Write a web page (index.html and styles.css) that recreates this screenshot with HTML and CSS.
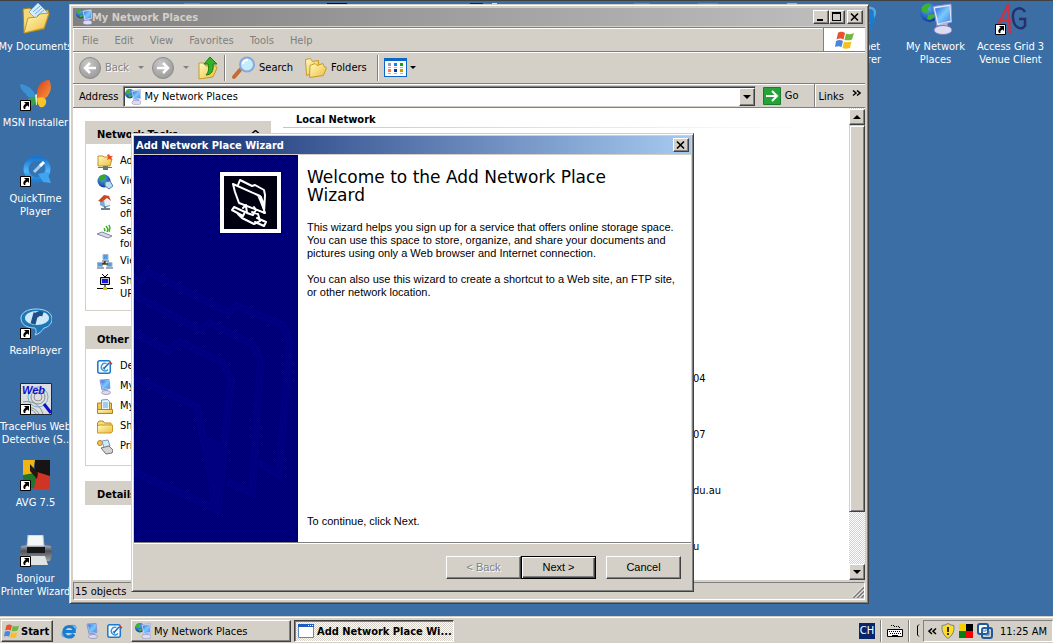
FILE: index.html
```html
<!DOCTYPE html>
<html lang="en">
<head>
<meta charset="utf-8">
<title>Desktop</title>
<link rel="stylesheet" href="styles.css">
</head>
<body>
<svg class="defs" aria-hidden="true">
  <defs>
    <linearGradient id="g-screen" x1="0" y1="0" x2="1" y2="1"><stop offset="0" stop-color="#1c6ae0"/><stop offset=".5" stop-color="#7cc8fa"/><stop offset="1" stop-color="#3a8cf0"/></linearGradient>
    <linearGradient id="g-folder" x1="0" y1="0" x2="1" y2="1"><stop offset="0" stop-color="#fffbc0"/><stop offset="1" stop-color="#eebc3c"/></linearGradient>
    <radialGradient id="g-globe" cx=".4" cy=".3" r=".7"><stop offset="0" stop-color="#5cacf8"/><stop offset="1" stop-color="#0a3ca0"/></radialGradient>
    <radialGradient id="g-grey" cx=".4" cy=".3" r=".7"><stop offset="0" stop-color="#c8c8c8"/><stop offset="1" stop-color="#9c9c9c"/></radialGradient>
    <linearGradient id="g-blue" x1="0" y1="0" x2="0" y2="1"><stop offset="0" stop-color="#1a74d0"/><stop offset=".6" stop-color="#4cb8fc"/><stop offset="1" stop-color="#1c80d8"/></linearGradient>
    <linearGradient id="g-orange" x1="0" y1="0" x2="1" y2="1"><stop offset="0" stop-color="#d83c1c"/><stop offset="1" stop-color="#fc9c3c"/></linearGradient>
    <linearGradient id="g-metal" x1="0" y1="0" x2="0" y2="1"><stop offset="0" stop-color="#b4b8bc"/><stop offset=".4" stop-color="#505458"/><stop offset="1" stop-color="#a0a4a8"/></linearGradient>
  </defs>
  <symbol id="i-shortcut" viewBox="0 0 11 11"><path fill="#fff" stroke="#000" d="M.5.5h10v10H.5z"/><path d="M4 2h5v5L7.500 5.500C5.500 6.500 5 7.500 5.500 9H4C2.500 7 3.500 5 5.700 3.800z"/></symbol>
  <symbol id="i-net" viewBox="0 0 32 32"><circle cx="9.500" cy="9.500" r="9.500" fill="url(#g-globe)"/><path fill="#3cb42c" d="M2 4c3-4 8-4 9-2l-3 3 1 4-4 1-3-2zM8 12l5-1 2 3-5 3-3-1z"/><path fill="#e4e4fa" stroke="#8c90cc" d="M13 3.500l18-2.500 1 18-15 4z"/><path fill="url(#g-screen)" d="M15 5.500L29.500 3l1 14.500-12 3z"/><path fill="#b4b4dc" d="M20 21l7-2 1 5-6 1z"/><ellipse cx="23" cy="27" rx="9" ry="4.500" fill="#dcdcf4" stroke="#7c7cb4"/></symbol>
  <symbol id="i-pc" viewBox="0 0 16 16"><path fill="#dcdcf4" stroke="#8890cc" d="M3 1l9-.5 1 9-8 1.500z"/><path fill="url(#g-screen)" d="M4 1.500l8-.5.5 8-7 1z"/><path fill="#b8b8dc" d="M8 11h3v2H8z"/><ellipse cx="9" cy="13.500" rx="4.500" ry="2" fill="#dcdcf0" stroke="#8484b4" stroke-width=".7"/></symbol>
  <symbol id="i-folder" viewBox="0 0 16 16"><path fill="#f8dc78" stroke="#b88a18" d="M.5 13V4l1.500-2h4l1.500 2H14v9z"/><path fill="url(#g-folder)" stroke="#c89a20" d="M.5 14V7.500L2 6h13.500v6.500L14 14z"/></symbol>
  <symbol id="i-docs" viewBox="0 0 32 32"><path fill="#f4d878" stroke="#a88020" d="M3 6l7-1 3 4 15-2 1 4-5 15L4 30z"/><path fill="#d4ecfc" stroke="#80b4e0" d="M9 9l9-9 10 10-8 10z"/><path stroke="#68a8dc" d="M13 9l7-6M15 11l7-6M17 13l7-6"/><path fill="url(#g-folder)" stroke="#c49628" d="M4 30l4-15 9-1 3-3 9-1-5 15z"/></symbol>
  <symbol id="i-flag" viewBox="0 0 20 18"><path fill="#e8532c" d="M3 2c3-2 5-1 7 0L8.500 8.500c-2-1-4-1.500-7 0z"/><path fill="#72b840" d="M11 2.500c2 1 5 1 8-.5l-2 6.500c-2 1-5 1-7.500.5z"/><path fill="#4888dc" d="M1 10c3-1.500 5-1 7 0l-1.500 6c-2-1-4-1-6.500 0z"/><path fill="#f8c020" d="M9 10.500c2 1 5 1 7.500 0L15 17c-3 1-5 1-7.500 0z"/></symbol>
  <symbol id="i-ie" viewBox="0 0 16 16"><ellipse cx="8" cy="8" rx="8" ry="4" fill="none" stroke="#50a8e8" stroke-width="1.200" transform="rotate(-35 8 8)"/><path fill="none" stroke="#187cd0" stroke-width="3" d="M3.500 8.500h9.800C13 1.800 3.200 1.600 3 8.500c-.1 6.500 7.800 7 10 2.700"/></symbol>
  <symbol id="i-desk" viewBox="0 0 16 16"><rect x=".8" y="1.800" width="12.500" height="12.500" rx="2" fill="#f4faff" stroke="#1c78c8" stroke-width="1.500"/><path fill="none" stroke="#2c90d8" stroke-width="1.300" d="M9.500 4.500A3.800 3.800 0 1 0 11 10.500M6 8.500l2 2"/><path stroke="#1c60b8" stroke-width="1.400" d="M7 9.500l5-5.500"/><path stroke="#d83818" stroke-width="2" d="M12.500 3.500L15 5"/></symbol>
  <symbol id="i-window" viewBox="0 0 16 16"><path fill="#fff" stroke="#5888c8" d="M.5 1.500h15v13H.5z"/><path fill="#1c5cc0" d="M0 1h16v3H0z"/><path fill="#fff" d="M10 2h1v1h-1zM12 2h1v1h-1zM14 2h1v1h-1z"/></symbol>
</svg>

<main class="desktop">
  <svg class="hidden-row" viewBox="0 0 640 2" width="640" height="2" aria-hidden="true"><path fill="#8c7c78" d="M0 0h16v2H0zM450 0h16v2h-16zM514 0h20v2h-20z"/><path fill="#0c0c18" d="M143 0h20v2h-20z"/><path fill="#28107c" d="M286 0h13v2h-13z"/><path fill="#8c54a8" d="M299 0h8v2h-8z"/><path fill="#e8e888" d="M308 0h5v2h-5z"/><path fill="#a8b4c0" d="M603 0h10v2h-10z"/></svg>

  <div class="icons icons-left">
    <a class="shortcut" href="#"><svg width="32" height="32"><use href="#i-docs"/></svg><span>My Documents</span></a>
    <a class="shortcut" href="#"><svg width="32" height="32" viewBox="0 0 32 32"><path fill="#3c90d4" d="M0 5c9 1 15 7 16 14-6 1-9-1-11-5-3-2-5-5-5-9z"/><path fill="url(#g-orange)" d="M17 18C16 7 22 1 29 1c4 7 1 13-2 17-3 2-7 3-10 0z"/><path fill="#38a048" d="M15 18c-7-1-9 4-6 9 5 1 7-3 7-8z"/><path fill="#f8c428" d="M17 19c6-2 10 0 9 5-1 4-4 5-6 4-2-2-3-5-3-9z"/><path fill="#e4e8c0" d="M15 16l2-1v11h-1z"/><use href="#i-shortcut" y="21" width="11" height="11"/></svg><span>MSN Installer</span></a>
    <a class="shortcut" href="#"><svg width="32" height="32" viewBox="0 0 32 32"><circle cx="17" cy="14" r="11" fill="#3474b0" stroke="url(#g-blue)" stroke-width="5"/><path fill="#40a4f0" d="M18 19l9-2 4 11-8-1z"/><path stroke="#a4ccf0" stroke-width="3" d="M14 17l8-8"/><path stroke="#fff" stroke-width="3" d="M20 11l4-4"/><use href="#i-shortcut" y="21" width="11" height="11"/></svg><span>QuickTime Player</span></a>
    <a class="shortcut after-gap" href="#"><svg width="32" height="32" viewBox="0 0 32 32"><path fill="#1c78b8" stroke="#a8d8f0" d="M16 2c10 0 16 4 16 10 0 4-3 8-8 9-2 3-5 6-9 7 2-3 1-5 0-7C6 21 1 17 1 11 1 6 7 2 16 2z"/><ellipse cx="17" cy="11" rx="12" ry="7" fill="#d0e8f8"/><path fill="none" stroke="#1c5088" stroke-width="5" d="M13 17l3-11M16 9c2-3 4-3 7-2"/><use href="#i-shortcut" y="21" width="11" height="11"/></svg><span>RealPlayer</span></a>
    <a class="shortcut" href="#"><svg width="32" height="32" viewBox="0 0 32 32"><path fill="#dcdee0" stroke="#202830" d="M.5.5h31v31H.5z"/><g fill="none" stroke="#8c9098"><circle cx="18" cy="14" r="4"/><circle cx="18" cy="14" r="7"/><circle cx="18" cy="14" r="10" stroke="#68b8c8"/><path d="M2 31c2-8 12-9 17 0M6 31c1-5 7-6 10 0M3 19c8-2 17 2 20 12"/></g><path stroke="#1010c8" stroke-width="3" d="M24 21l7 9"/><text class="web-mark" x="2" y="11">Web</text><use href="#i-shortcut" y="21" width="11" height="11"/></svg><span>TracePlus Web Detective (S..</span></a>
    <a class="shortcut" href="#"><svg width="32" height="32" viewBox="0 0 32 32"><path fill="#f0b414" d="M3 1h12l-3 16H3z"/><path fill="#181414" d="M15 1h15v16H14z"/><path fill="#20742c" d="M3 16l11-2 3 6-3 9H3z"/><path fill="#d03424" d="M17 13l13 4v13H14z"/><path fill="#28180c" d="M10 5l8 9-1 6-7-8z"/><use href="#i-shortcut" y="21" width="11" height="11"/></svg><span>AVG 7.5</span></a>
    <a class="shortcut" href="#"><svg width="32" height="32" viewBox="0 0 32 32"><path fill="url(#g-metal)" d="M1 11q15-3 30 0l1 9-2 6H2l-2-5z"/><path fill="#f4f6f8" stroke="#b8c0c8" d="M8 0h15l1 11H7z"/><path fill="#151719" d="M7 12h18v6H7z"/><path fill="#e0e2e4" d="M7 21h18l3 9H4z"/><use href="#i-shortcut" y="21" width="11" height="11"/></svg><span>Bonjour<br>Printer Wizard</span></a>
  </div>

  <div class="icons icons-right">
    <a class="shortcut" href="#"><svg width="32" height="32"><use href="#i-ie"/></svg><span>Internet Explorer</span></a>
    <a class="shortcut" href="#"><svg width="32" height="32"><use href="#i-net"/></svg><span>My Network Places</span></a>
    <a class="shortcut" href="#"><svg width="32" height="32" viewBox="0 0 32 32"><path fill="none" stroke="#c83444" stroke-width="2.500" d="M2 24L13 2l2 29M6 17h10"/><path fill="none" stroke="#28306c" stroke-width="2.500" d="M30 9c-3-6-13-5-12 6s9 12 12 8v-7h-6"/><use href="#i-shortcut" y="21" width="11" height="11"/></svg><span>Access Grid 3 Venue Client</span></a>
  </div>

  <section class="window explorer" aria-label="My Network Places">
    <header class="titlebar inactive">
      <svg width="16" height="16"><use href="#i-net"/></svg>
      <h2>My Network Places</h2>
      <button class="cap" aria-label="Minimize"><svg width="12" height="10" shape-rendering="crispEdges"><path d="M2 7h6v2H2z"/></svg></button>
      <button class="cap" aria-label="Maximize"><svg width="12" height="10" shape-rendering="crispEdges"><path fill-rule="evenodd" d="M1 0h9v9H1zM2 2v6h7V2z"/></svg></button>
      <button class="cap cap-close" aria-label="Close"><svg width="12" height="10"><path stroke="#000" stroke-width="1.600" d="M2 1.500l7 7M9 1.500l-7 7"/></svg></button>
    </header>

    <nav class="menubar">
      <div class="menus"><button>File</button><button>Edit</button><button>View</button><button>Favorites</button><button>Tools</button><button>Help</button></div>
      <div class="throbber"><svg width="20" height="18"><use href="#i-flag"/></svg></div>
    </nav>

    <div class="toolbar">
      <button class="tool disabled"><svg width="22" height="22" viewBox="0 0 22 22"><circle cx="11" cy="11" r="10.500" fill="url(#g-grey)" stroke="#8c8c8c"/><path fill="none" stroke="#fff" stroke-width="2.500" d="M17 11H6M11 6l-5 5 5 5"/></svg>Back</button>
      <button class="drop drop-grey" aria-label="Back history"></button>
      <button class="tool disabled" aria-label="Forward"><svg width="22" height="22" viewBox="0 0 22 22"><circle cx="11" cy="11" r="10.500" fill="url(#g-grey)" stroke="#8c8c8c"/><path fill="none" stroke="#fff" stroke-width="2.500" d="M5 11h11M11 6l5 5-5 5"/></svg></button>
      <button class="drop drop-grey" aria-label="Forward history"></button>
      <button class="tool tool-up" aria-label="Up"><svg width="22" height="24" viewBox="0 0 22 24"><path fill="url(#g-folder)" stroke="#c89a28" d="M2 7h5l2 3h10l1 2-4 9-14 2z"/><path fill="#34b424" stroke="#187c10" d="M13 1l7 7h-4c1 7-2 11-7 11 3-3 3-7 2-11H7z"/></svg></button>
      <i class="rule"></i>
      <button class="tool"><svg width="24" height="24" viewBox="0 0 24 24"><path stroke="#c46c34" stroke-width="4" stroke-linecap="round" d="M3 21l6-7"/><circle cx="16" cy="8.500" r="7" fill="#c4ecfc" stroke="#88a8d8" stroke-width="2"/><path fill="none" stroke="#fff" stroke-width="2" d="M12 8c0-3 3-4 5-4"/></svg>Search</button>
      <button class="tool tool-folders"><svg width="22" height="20" viewBox="0 0 22 20"><path fill="url(#g-folder)" stroke="#c89a28" d="M.5 1.500l5-1 2 3 6-1v10l-12 5z"/><path fill="url(#g-folder)" stroke="#c89a28" d="M5 7.500l5-2 2 2 6-2 1 3 2.500 1-3 8-14 2z"/></svg>Folders</button>
      <i class="rule rule-after"></i>
      <button class="tool" aria-label="Views"><svg width="24" height="20" viewBox="0 0 24 20" shape-rendering="crispEdges"><path fill="#fff" stroke="#0c68c8" d="M.5.5h22v18H.5z"/><path fill="#0c68c8" d="M0 0h23v3H0z"/><path fill="#9c98c8" d="M4 5h3v3H4z"/><path fill="#1c80e0" d="M10 5h3v3h-3z"/><path fill="#18a020" d="M16 5h3v3h-3z"/><path fill="#fc7c50" d="M4 11h3v3H4z"/><path fill="#0c3894" d="M10 11h3v3h-3z"/><path fill="#cc9c04" d="M16 11h3v3h-3z"/><path fill="#b4b4b4" d="M4 9h3v1H4zM10 9h3v1h-3zM16 9h3v1h-3zM4 15h3v1H4zM10 15h3v1h-3zM16 15h3v1h-3z"/></svg></button>
      <button class="drop" aria-label="View options"></button>
    </div>

    <div class="addressbar">
      <label for="address">Address</label>
      <div class="combo">
        <svg width="16" height="16"><use href="#i-net"/></svg>
        <input id="address" type="text" value="My Network Places">
        <button class="combo-button" aria-label="Show addresses"><i class="arrow-down"></i></button>
      </div>
      <button class="go"><svg width="18" height="18" viewBox="0 0 18 18"><path fill="#24a438" stroke="#1c7c2c" d="M.5.5h17v17H.5z"/><path fill="none" stroke="#fff" stroke-width="2" d="M3 9h11M9 4l5 5-5 5"/></svg>Go</button>
      <div class="links"><span>Links</span><svg width="9" height="7" viewBox="0 0 9 7"><path fill="none" stroke="#000" stroke-width="1.500" d="M1 .5l3 2.500-3 2.500M5 .5l3 2.500-3 2.500"/></svg></div>
    </div>

    <div class="client">
      <aside class="tasks">
        <section class="task-box">
          <h3>Network Tasks <svg width="9" height="8" viewBox="0 0 9 8"><path fill="none" stroke="#000" stroke-width="1.500" d="M1 3.500L4.500.5 8 3.500M1 7.500l3.500-3L8 7.500"/></svg></h3>
          <ul>
            <li><svg width="16" height="16" viewBox="0 0 16 16"><path fill="url(#g-folder)" stroke="#c49424" d="M1 2h5l1 1h5l3 2-2 7H1z"/><path fill="#e85020" d="M12 0l1 2 3 0-2 2 1 2-3-1-2 1 1-3-1-2z"/><path fill="#687870" d="M1 13h14v1H1zM6 12h5v4H6z"/></svg>Add a network place</li>
            <li><svg width="16" height="16" viewBox="0 0 16 16"><circle cx="7" cy="7" r="6.500" fill="url(#g-globe)"/><path fill="#34a828" d="M2 3c3-3 7-3 7-1L7 6 3 7zM7 8l4-1-1 5z"/><path fill="#b8dcf0" stroke="#587c9c" d="M8 8l5-1 3 5-4 3-4-3z"/></svg>View network connections</li>
            <li><svg width="16" height="16" viewBox="0 0 16 16"><path fill="#80a8d0" d="M3 7h10v5l-5 2-5-3z"/><path fill="#e8f0f8" d="M7 6h6v5l-5 1z"/><path fill="#cc4820" d="M1 7l6-6 5 1 2 5-4-3-5 4z"/><path fill="#6c8090" d="M7 12h2v2h4v2H4v-2h3z"/></svg>Set up a home or small office network</li>
            <li><svg width="16" height="16" viewBox="0 0 16 16"><path fill="#d8dce8" stroke="#8088a0" d="M0 10l5-2 10 4-4 2z"/><path fill="none" stroke="#38b020" stroke-width="1.400" d="M7 4l1 2-1 1M9 2l2 3-1 3M12 1l1 3-1 4"/></svg>Set up a wireless network for a home or small office</li>
            <li><svg width="16" height="16" viewBox="0 0 16 16"><path fill="#4c9ce8" stroke="#a0b8d0" d="M6 .5h5v5H6zM.5 8.500h5v4h-5zM10 8.500h5v4h-5z"/><path fill="#a0a8b8" d="M5 6h7v2H5zM0 13h7v2H0zM9 13h7v2H9z"/><path stroke="#504020" stroke-width="1.500" d="M8 7v3H5M8 10h3"/></svg>View workgroup computers</li>
            <li><svg width="16" height="16" viewBox="0 0 16 16"><path fill="#c8c8c8" stroke="#000" d="M3.500 3.500h9v7h-9z"/><path fill="#1818e0" d="M5 5h6v4H5z"/><path fill="none" stroke="#000" d="M5 0l3 3 3-3M8 11v3M0 14.500h16"/><path fill="#d8c800" d="M6 13h4v3H6z"/></svg>Show icons for networked UPnP devices</li>
          </ul>
        </section>
        <section class="task-box">
          <h3>Other Places</h3>
          <ul>
            <li><svg width="16" height="16"><use href="#i-desk"/></svg>Desktop</li>
            <li><svg width="16" height="16"><use href="#i-pc"/></svg>My Computer</li>
            <li><svg width="16" height="16" viewBox="0 0 16 16"><path fill="#f0c858" stroke="#b08418" d="M.5 13.500V4h14v9.500z"/><path fill="#e4f2fc" stroke="#6898c8" d="M4.500 9V1l6-.5 2 2V11h-8z"/><path stroke="#70a0d0" d="M6 4h5M6 6h5M6 8h5"/><path fill="url(#g-folder)" stroke="#b08418" d="M.5 14.500v-4h15v4z"/></svg>My Documents</li>
            <li><svg width="16" height="16"><use href="#i-folder"/></svg>Shared Documents</li>
            <li><svg width="16" height="16" viewBox="0 0 16 16"><circle cx="3" cy="4" r="2.500" fill="#f4c44c" stroke="#b88420"/><path fill="#d0e8fc" stroke="#8098b8" d="M5 2l6-1 2 6-6 2z"/><path fill="#d4d4d4" stroke="#747474" d="M4 9l8-2 4 4-1 3-6 1z"/></svg>Printers and Faxes</li>
          </ul>
        </section>
        <section class="task-box closed"><h3>Details</h3></section>
      </aside>

      <div class="listing">
        <h3>Local Network</h3>
        <ul><li>04</li><li>07</li><li>du.au</li><li>u</li></ul>
      </div>

      <div class="scrollbar">
        <button class="scroll-button" aria-label="Scroll up"><i class="arrow-up"></i></button>
        <div class="thumb"></div>
        <button class="scroll-button" aria-label="Scroll down"><i class="arrow-down"></i></button>
      </div>
    </div>

    <footer class="statusbar"><span>15 objects</span><svg width="12" height="12" viewBox="0 0 12 12"><path stroke="#808080" stroke-width="2" d="M1 12L12 1M5 12l7-7M9 12l3-3"/><path stroke="#fff" d="M0 11.500L11.500 0M4 11.500L12 3.500M8 11.500l4-4"/></svg></footer>
  </section>

  <section class="window wizard" role="dialog" aria-label="Add Network Place Wizard">
    <header class="titlebar">
      <h2>Add Network Place Wizard</h2>
      <button class="cap" aria-label="Close"><svg width="12" height="10"><path stroke="#000" stroke-width="1.600" d="M2 1.500l7 7M9 1.500l-7 7"/></svg></button>
    </header>
    <div class="wizard-body">
      <div class="banner">
        <svg class="watermark" viewBox="0 0 164 387" width="164" height="387" aria-hidden="true"><g fill="none" stroke="#000080" stroke-width="8"><path d="M93 157l-79-40-11 13 1 12 62 33 10-7 43 22 8 15-9 133-25-11"/><path d="M88 154l7 3 8-6 46 19 7 18-11 132-22-13"/><path d="M0 178l34 18 12-9 42 20 9 18-13 130-84-38M0 222l63 30 6 30 15 70"/></g><path fill="#000080" d="M69 280l20 8-4 68-9-9z"/></svg>
        <svg class="emblem" viewBox="0 0 61 61" width="61" height="61" aria-hidden="true"><path fill="none" stroke="#fff" stroke-width="4" d="M2 2h57v57H2z"/><g fill="none" stroke="#fff" stroke-width="2" stroke-linejoin="round" stroke-linecap="round"><path d="M13 12l27 12 5 17-26-10-4-11zM18 13l2-5 12 6 3-1 9 5 1 5-1 18"/><path d="M41 25l3 9M23 36l3-3M26 34l1 7 6 2 3-5-2-3M14 35l-2 3 11 6 2-4zM18 42l4 4 12 6 6-3-2-7-6-2M37 46l9 4-2 4-9-4"/></g><path fill="#fff" d="M37 23l7 6v11z"/></svg>
      </div>
      <div class="wizard-text">
        <h1>Welcome to the Add Network Place Wizard</h1>
        <p>This wizard helps you sign up for a service that offers online storage space. You can use this space to store, organize, and share your documents and pictures using only a Web browser and Internet connection.</p>
        <p>You can also use this wizard to create a shortcut to a Web site, an FTP site, or other network location.</p>
        <p class="continue">To continue, click Next.</p>
      </div>
    </div>
    <footer class="wizard-buttons">
      <button class="push" disabled>&lt; Back</button>
      <button class="push default">Next &gt;</button>
      <button class="push cancel">Cancel</button>
    </footer>
  </section>
</main>

<footer class="taskbar">
  <button class="start"><svg width="16" height="16"><use href="#i-flag"/></svg>Start</button>
  <div class="quick">
    <a href="#" aria-label="Internet Explorer"><svg width="16" height="16"><use href="#i-ie"/></svg></a>
    <a href="#" aria-label="My Computer"><svg width="16" height="16"><use href="#i-pc"/></svg></a>
    <a href="#" aria-label="Show Desktop"><svg width="16" height="16"><use href="#i-desk"/></svg></a>
  </div>
  <button class="task"><svg width="16" height="16"><use href="#i-net"/></svg>My Network Places</button>
  <button class="task pressed"><svg width="16" height="16"><use href="#i-window"/></svg>Add Network Place Wi...</button>
  <div class="language"><span class="lang-code">CH</span><i class="rule"></i>
    <svg width="16" height="14" viewBox="0 0 16 14"><path fill="none" stroke="#000" stroke-dasharray="1 1" d="M4 1.500h3M7 2.500h5M12 3.500h2"/><path fill="#fff" stroke="#000" d="M.5 5.500h15v7H.5z"/><path stroke="#000" stroke-dasharray="1 1" d="M2 7.500h12M3 9.500h11"/><path stroke="#000" d="M5 11.500h6"/></svg><i class="rule"></i></div>
  <svg class="grip" width="4" height="14" viewBox="0 0 4 14"><path fill="none" stroke="#000" d="M3 .5L1.500 2v9L3 12.500"/></svg>
  <div class="tray">
    <svg width="9" height="7" viewBox="0 0 9 7"><path fill="none" stroke="#000" stroke-width="1.500" d="M4 .5L1 3.200 4 6M8 .5L5 3.200 8 6"/></svg>
    <svg width="14" height="16" viewBox="0 0 14 16"><path fill="#fcdc28" stroke="#788090" d="M7 .5q3 2 6 2Q14 11 7 15.500 0 11 1 2.500q3 0 6-2z"/><path fill="#303030" d="M6 4h2v5H6zM6 10h2v2H6z"/></svg>
    <svg width="14" height="14" shape-rendering="crispEdges"><path fill="#f8d000" d="M0 0h7v7H0z"/><path d="M7 0h7v7H7z"/><path fill="#008018" d="M0 7h7v7H0z"/><path fill="#fc0000" d="M7 7h7v7H7z"/></svg>
    <svg width="16" height="16" viewBox="0 0 16 16"><rect x="1" y="1" width="10" height="10" rx="2" fill="#fff" stroke="#205898" stroke-width="2"/><rect x="5" y="5" width="10" height="10" rx="2" fill="none" stroke="#205898" stroke-width="2"/><path fill="none" stroke="#4080c0" d="M4 8h5V4M8 12h4V8"/></svg>
    <time>11:25 AM</time>
  </div>
</footer>
</body>
</html>
```
FILE: styles.css
```css
:root {
  --face: #d4d0c8;
  --shadow: #808080;
  --dark: #404040;
  --desk: #3a6ea5;
  --ui: "DejaVu Sans Condensed", "DejaVu Sans", sans-serif;
}

* { box-sizing: border-box; }

body {
  margin: 0;
  height: 100vh;
  display: flex;
  flex-direction: column;
  overflow: hidden;
  background: var(--desk);
  color: #000;
  font: 11px/13px var(--ui);
}

h1, h2, h3, ul, p { margin: 0; padding: 0; }
h2, h3 { font-size: 11px; line-height: 13px; font-weight: bold; }
ul { list-style: none; }
svg { flex: none; display: block; }
button, input { font: inherit; color: inherit; margin: 0; padding: 0; border: 0; background: none; border-radius: 0; }
a { color: inherit; text-decoration: none; }

.defs { position: absolute; width: 0; height: 0; }

/* Desktop */
.desktop {
  position: relative;
  flex: 1;
  min-height: 0;
  overflow: hidden;
  box-shadow: inset 0 1px var(--dark);
}
.hidden-row { position: absolute; left: 184px; top: 3px; }
.icons { position: absolute; top: 3px; display: flex; color: #fff; }
.icons-left { left: -2px; flex-direction: column; }
.icons-right { right: 5px; }
.shortcut {
  width: 75px;
  height: 76px;
  display: flex;
  flex-direction: column;
  align-items: center;
  gap: 5px;
  text-align: center;
}
.after-gap { margin-top: 76px; }
.web-mark { font: italic bold 11px "Liberation Sans", sans-serif; fill: #1010d0; }

/* Window frames */
.window {
  position: absolute;
  display: flex;
  flex-direction: column;
  background: var(--face);
  border: 1px solid;
  border-color: var(--face) var(--dark) var(--dark) var(--face);
  box-shadow: inset 1px 1px #fff, inset -1px -1px var(--shadow);
}
.explorer { inset: 4px 184px 12px 69px; padding: 3px; }
.wizard { inset: 133px 359px 24px 131px; padding: 2px; }

.titlebar {
  height: 18px;
  flex: none;
  display: flex;
  align-items: center;
  padding: 0 2px;
  background: linear-gradient(to right, #0a246a, #a6caf0);
  color: #fff;
}
.titlebar.inactive {
  padding-left: 3px;
  background: linear-gradient(to right, #808080, #c0c0c0);
  color: var(--face);
}
.titlebar h2 { flex: 1; white-space: nowrap; }

.cap, .scroll-button, .combo-button, .push, .start, .task {
  background: var(--face);
  border: 1px solid;
  border-color: #fff var(--dark) var(--dark) #fff;
  box-shadow: inset -1px -1px var(--shadow);
}
.cap { width: 16px; height: 14px; }
.cap svg { margin: 0 1px; }
.cap-close { margin-left: 2px; }

/* Explorer bars */
.menubar {
  height: 25px;
  flex: none;
  display: flex;
  margin-top: 1px;
  border-top: 1px solid var(--shadow);
  border-bottom: 1px solid var(--shadow);
  box-shadow: inset 1px 1px #fff;
  color: var(--shadow);
}
.menus { flex: 1; display: flex; padding-left: 1px; }
.menus button { padding: 2px 8px 0; }
.throbber {
  width: 42px;
  display: flex;
  align-items: center;
  justify-content: center;
  background: #fff;
  border-left: 1px solid var(--shadow);
}
.toolbar {
  height: 32px;
  flex: none;
  display: flex;
  align-items: center;
  padding-left: 6px;
  border-bottom: 1px solid var(--shadow);
  box-shadow: inset 1px 1px #fff;
}
.tool { display: flex; align-items: center; gap: 4px; }
.disabled { color: var(--shadow); text-shadow: 1px 1px #fff; }
.drop { width: 23px; height: 24px; display: grid; place-items: center; }
.drop::before, .arrow-down {
  content: "";
  border: solid transparent;
  border-width: 3px 3px 0;
  border-top-color: #000;
}
.drop-grey::before { border-top-color: var(--shadow); }
.rule { width: 2px; height: 26px; border-left: 1px solid var(--shadow); border-right: 1px solid #fff; }
.tool-up { margin-right: 5px; }
.toolbar .rule { margin-right: 5px; }
.tool-folders { margin-left: 12px; }
.toolbar .rule-after { margin-left: 10px; }
.toolbar > .drop:last-child { width: 10px; }

.addressbar {
  height: 24px;
  flex: none;
  display: flex;
  align-items: stretch;
  border-bottom: 1px solid var(--shadow);
  box-shadow: inset 1px 1px #fff;
}
.addressbar label { padding: 6px 5px 0 6px; }
.combo {
  flex: 1;
  display: flex;
  align-items: center;
  margin-top: 2px;
  padding-left: 1px;
  background: #fff;
  border: 1px solid;
  border-color: var(--shadow) var(--face) var(--face) var(--shadow);
  box-shadow: inset 1px 1px var(--dark);
}
.combo input { flex: 1; min-width: 0; margin-left: 3px; height: 16px; outline: 0; }
.combo-button { width: 16px; height: 18px; display: grid; place-items: center; }
.go { display: flex; align-items: center; gap: 4px; padding: 0 15px 0 7px; }
.links {
  display: flex;
  padding: 6px 4px 0;
  gap: 8px;
  border-left: 1px solid var(--shadow);
  box-shadow: inset 1px 1px #fff;
}

/* Explorer contents */
.client { flex: 1; min-height: 0; display: flex; background: #fff; overflow: hidden; }
.tasks { width: 198px; flex: none; padding: 13px 0 0 12px; display: flex; flex-direction: column; gap: 15px; }
.task-box { border: 1px solid var(--face); border-top: 0; }
.task-box h3 {
  display: flex;
  justify-content: space-between;
  align-items: center;
  height: 23px;
  padding: 3px 10px 0 11px;
  background: var(--face);
}
.task-box ul { display: flex; flex-direction: column; gap: 4px; padding: 10px 11px; }
.task-box li { display: flex; gap: 7px; min-height: 16px; }
.listing { flex: 1; min-width: 0; padding: 5px 40px 0 12px; }
.listing h3 { height: 15px; padding-left: 13px; background: linear-gradient(to right, #a6caf0, #fff) bottom / 100% 1px no-repeat; }
.listing ul { margin: 244px 0 0 410px; display: flex; flex-direction: column; gap: 43px; }

.scrollbar {
  width: 16px;
  flex: none;
  display: flex;
  flex-direction: column;
  padding-top: 1px;
  background: repeating-conic-gradient(#fff 0 25%, var(--face) 0 50%) 0 0 / 2px 2px;
}
.scroll-button { height: 16px; flex: none; display: grid; place-items: center; }
.arrow-up { border: solid transparent; border-width: 0 4px 4px; border-bottom-color: #000; }
.arrow-down { border-width: 4px 4px 0; }
.thumb {
  height: 88%;
  flex: 0 1 387px;
  margin-bottom: auto;
  background: var(--face);
  border: 1px solid;
  border-color: var(--face) var(--dark) var(--dark) var(--face);
  box-shadow: inset 1px 1px #fff, inset -1px -1px var(--shadow);
}

.statusbar {
  height: 18px;
  flex: none;
  display: flex;
  justify-content: space-between;
  align-items: flex-end;
  margin-top: 2px;
  padding: 0 0 1px 1px;
  border: 1px solid;
  border-color: var(--shadow) #fff #fff var(--shadow);
}

/* Wizard */
.wizard-body { flex: 1; min-height: 0; display: flex; margin-top: 1px; background: #fff; }
.banner {
  position: relative;
  width: 164px;
  flex: none;
  overflow: hidden;
  padding: 17px 0 0 86px;
  background: repeating-conic-gradient(#000080 0 25%, #000 0 50%) 0 0 / 2px 2px;
}
.watermark { position: absolute; left: 0; top: 0; }
.emblem { position: relative; background: #000010; }
.wizard-text {
  flex: 1;
  min-width: 0;
  display: flex;
  flex-direction: column;
  gap: 13px;
  padding: 13px 8px 14px 9px;
  font-family: "Liberation Sans", Arial, sans-serif;
}
.wizard-text h1 { max-width: 350px; font: 17px/18px "DejaVu Sans", sans-serif; margin-bottom: 4px; }
.continue { margin-top: auto; }
.wizard-buttons {
  flex: none;
  display: flex;
  justify-content: flex-end;
  padding: 13px 10px 10px;
  border-top: 1px solid var(--shadow);
  box-shadow: inset 0 1px #fff;
  font-family: "Liberation Sans", Arial, sans-serif;
}
.push { width: 75px; height: 23px; }
.push:disabled { color: var(--shadow); text-shadow: 1px 1px #fff; }
.push.default { border-color: #000; box-shadow: inset 1px 1px #fff, inset -1px -1px var(--dark), inset -2px -2px var(--shadow); }
.cancel { margin-left: 10px; }

/* Taskbar */
.taskbar {
  height: 27px;
  flex: none;
  display: flex;
  align-items: center;
  padding: 3px 0 0 1px;
  background: var(--face);
  box-shadow: inset 0 1px var(--face), inset 0 2px #fff;
}
.start { display: flex; align-items: center; gap: 1px; width: 52px; height: 22px; padding-left: 2px; font-weight: bold; }
.quick { display: flex; gap: 7px; padding: 0 8px; }
.task { display: flex; align-items: center; gap: 3px; width: 160px; height: 22px; padding-left: 3px; margin-right: 3px; white-space: nowrap; }
.pressed {
  font-weight: bold;
  border-color: var(--dark) #fff #fff var(--dark);
  box-shadow: inset 1px 1px var(--shadow);
  background: repeating-conic-gradient(#fff 0 25%, var(--face) 0 50%) 0 0 / 2px 2px;
}
.language { display: flex; align-items: center; gap: 5px; margin-left: auto; }
.lang-code { width: 16px; line-height: 16px; background: #0a246a; color: #fff; text-align: center; }
.language .rule { height: 22px; }
.grip { margin: 0 3px 0 6px; }
.tray {
  display: flex;
  align-items: center;
  gap: 4px;
  height: 22px;
  padding: 0 5px 0 4px;
  border: 1px solid;
  border-color: var(--shadow) #fff #fff var(--shadow);
}
.tray time { margin-left: 3px; white-space: nowrap; }
```
